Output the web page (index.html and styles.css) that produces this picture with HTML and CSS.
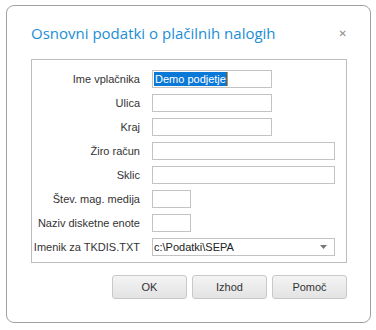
FILE: index.html
```html
<!DOCTYPE html>
<html lang="sl">
<head>
    <meta charset="UTF-8">
    <title>Osnovni podatki o plačilnih nalogih</title>
    <link rel="stylesheet" href="styles.css">
</head>
<body>

<div class="dialog">
    <div class="dialog-header">
        <div class="dialog-title">Osnovni podatki o plačilnih nalogih</div>
        <div class="dialog-close">&#x2715;</div>
    </div>

    <div class="group">
        <label>Ime vplačnika</label>
        <div class="field medium"><span class="selected">Demo podjetje</span><span class="caret"></span></div>

        <label>Ulica</label>
        <div class="field medium"></div>

        <label>Kraj</label>
        <div class="field medium"></div>

        <label>Žiro račun</label>
        <div class="field wide"></div>

        <label>Sklic</label>
        <div class="field wide"></div>

        <label>Štev. mag. medija</label>
        <div class="field small"></div>

        <label>Naziv disketne enote</label>
        <div class="field small"></div>

        <label>Imenik za TKDIS.TXT</label>
        <div class="field wide combo">
            <span>c:\Podatki\SEPA</span>
            <svg width="7" height="4" viewBox="0 0 7 4"><polygon points="0,0 7,0 3.5,4" fill="#777"/></svg>
        </div>
    </div>

    <div class="buttons">
        <button>OK</button>
        <button>Izhod</button>
        <button>Pomoč</button>
    </div>
</div>

</body>
</html>
```

FILE: styles.css
```css
body {
    margin: 0;
    padding: 0;
    background: #fff;
    font-family: "Liberation Sans", Arial, sans-serif;
    font-size: 11px;
    color: #333;
}
.dialog {
    box-sizing: border-box;
    width: 365px;
    height: 318px;
    margin: 5px 0 0 6px;
    padding: 0 23px 0 24px;
    border: 1px solid #a0a0a0;
    border-radius: 8px;
    background: #fff;
}
.dialog-header {
    height: 53px;
    display: flex;
    align-items: center;
    justify-content: space-between;
    padding-top: 1px;
    box-sizing: border-box;
}
.dialog-title {
    font-family: "Open Sans", sans-serif;
    font-size: 15px;
    color: #1b8ed6;
}
.dialog-close {
    font-family: "DejaVu Sans", sans-serif;
    font-size: 10px;
    font-weight: bold;
    color: #8a8a8a;
    margin-right: 0;
}
.group {
    display: grid;
    grid-template-columns: 108px 1fr;
    column-gap: 12px;
    row-gap: 6px;
    align-items: center;
    padding: 10px 0 6px 0;
    border: 1px solid #bdbdbd;
}
.group label {
    text-align: right;
    color: #333;
}
.field {
    box-sizing: border-box;
    height: 18px;
    border: 1px solid #c3c3c3;
    background: #fff;
    display: flex;
    align-items: center;
    padding-left: 1px;
}
.field.medium { width: 120px; }
.field.wide { width: 183px; }
.field.small { width: 39px; }
.selected {
    background: #0a78d7;
    color: #fff;
    line-height: 14px;
    padding: 0 1px;
}
.caret {
    width: 1px;
    height: 14px;
    background: #f08a00;
}
.combo {
    justify-content: space-between;
    padding-right: 7px;
    color: #222;
}
.buttons {
    display: flex;
    justify-content: flex-end;
    gap: 5px;
    margin-top: 12px;
}
.buttons button {
    width: 75px;
    height: 24px;
    border: 1px solid #c8c8c8;
    border-radius: 3px;
    background: linear-gradient(#f4f4f4, #e3e3e3);
    font-family: "Liberation Sans", Arial, sans-serif;
    font-size: 11px;
    color: #333;
}
```
